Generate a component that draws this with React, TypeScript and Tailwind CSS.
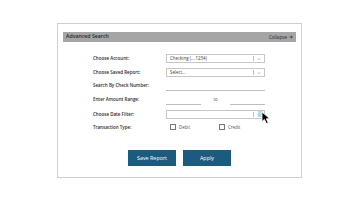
import React from "react";

const font = { fontFamily: '"Open Sans", "Liberation Sans", sans-serif' };

function Chevron() {
  return (
    <div className="flex items-center h-full">
      <div className="w-px h-[5px] bg-[#bdbdbd]" />
      <svg width="8" height="6" viewBox="0 0 8 6" className="ml-[1px]">
        <path d="M2.5 2.5 L4 3.8 L5.5 2.5" fill="none" stroke="#a0a0a0" strokeWidth="0.6" />
      </svg>
    </div>
  );
}

function Select({ value }: { value: string }) {
  return (
    <div className="w-[99px] h-[9px] border border-[#c6c6c6] flex items-center justify-between pl-[3px] pr-[1px]">
      <span className="text-[4.4px] text-[#3a3a3a]">{value}</span>
      <Chevron />
    </div>
  );
}

function Label({ children }: { children: React.ReactNode }) {
  return <div className="w-[73px] shrink-0 text-[4.5px] font-semibold text-[#2a2a2a]">{children}</div>;
}

function Checkbox({ label }: { label: string }) {
  return (
    <div className="flex items-center gap-[3px]">
      <div className="w-[6px] h-[6px] border border-[#777] rounded-[0.5px]" />
      <span className="text-[4.4px] text-[#555]">{label}</span>
    </div>
  );
}

export default function App() {
  return (
    <div className="w-[360px] h-[202px] bg-white overflow-hidden pt-[23px] pl-[57px]" style={font}>
      <div className="relative w-[245px] h-[155px] border border-[#cfcfcf] px-[5px] pt-[8px]">
        {/* header */}
        <div className="h-[10px] bg-[#a5a5a5] flex items-center justify-between px-[3px]">
          <span className="text-[5.2px] text-[#262626] font-semibold">Advanced Search</span>
          <span className="text-[4.6px] text-[#262626] flex items-center gap-[2px]">
            Collapse
            <svg width="4" height="4" viewBox="0 0 4 4">
              <path d="M0.5 2 H3.2 M2 0.8 L3.3 2 L2 3.2" fill="none" stroke="#262626" strokeWidth="0.7" />
            </svg>
          </span>
        </div>

        {/* form */}
        <div className="pl-[30px] pt-[12px]">
          <div className="flex items-center h-[9px]">
            <Label>Choose Account:</Label>
            <Select value="Checking (....1234)" />
          </div>
          <div className="flex items-center h-[9px] mt-[5px]">
            <Label>Choose Saved Report:</Label>
            <Select value="Select..." />
          </div>
          <div className="flex items-center h-[11px] mt-[3px]">
            <Label>Search By Check Number:</Label>
            <div className="w-[99px] h-[11px] border-b border-[#bdbdbd]" />
          </div>
          <div className="flex items-center h-[11px] mt-[3px]">
            <Label>Enter Amount Range:</Label>
            <div className="w-[99px] flex items-end h-[11px]">
              <div className="w-[35px] h-[11px] border-b border-[#bdbdbd]" />
              <div className="flex-1 text-center text-[4.4px] text-[#555] pb-[2px]">to</div>
              <div className="w-[35px] h-[11px] border-b border-[#bdbdbd]" />
            </div>
          </div>
          <div className="flex items-center h-[9px] mt-[5px]">
            <Label>Choose Date Filter:</Label>
            <Select value="" />
          </div>
          <div className="flex items-center h-[7px] mt-[5px]">
            <Label>Transaction Type:</Label>
            <div className="flex items-center pl-[4px]">
              <div className="w-[49px]">
                <Checkbox label="Debit" />
              </div>
              <Checkbox label="Credit" />
            </div>
          </div>
        </div>

        {/* buttons */}
        <div className="flex justify-center gap-[7px] mt-[19px]">
          <button className="w-[48px] h-[16px] bg-[#1c5b80] text-white text-[5.4px]">Save Report</button>
          <button className="w-[48px] h-[16px] bg-[#1c5b80] text-white text-[5.4px]">Apply</button>
        </div>

        {/* hover + cursor */}
        <div className="absolute left-[200px] top-[87px] w-[5px] h-[6px] bg-[#9fd3e8] opacity-80" />
        <svg className="absolute left-[203px] top-[87px]" width="12" height="14" viewBox="0 0 12 14">
          <path d="M1 1 L1 10.5 L3.4 8.4 L5.4 12.6 L7.2 11.8 L5.3 7.8 L8.6 7.6 Z" fill="#000" stroke="#fff" strokeWidth="0.8" strokeLinejoin="round" />
        </svg>
      </div>
    </div>
  );
}
